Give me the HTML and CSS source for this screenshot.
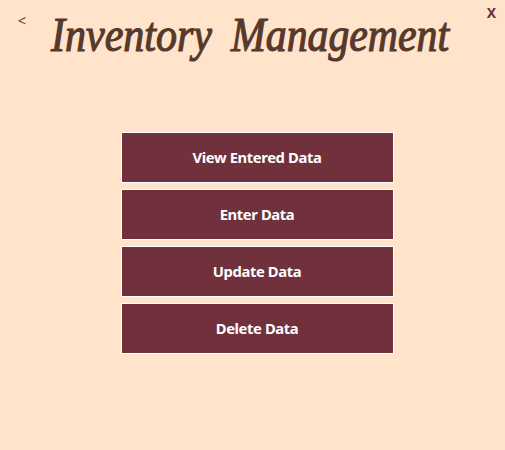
FILE: index.html
```
<!DOCTYPE html>
<html lang="en">
<head>
<meta charset="utf-8">
<title>Inventory Management</title>
<link rel="stylesheet" href="styles.css">
</head>
<body>
<header class="header">
  <button class="nav back">&lt;</button>
  <h1 class="title">
    <svg class="lettering" width="420" height="80" viewBox="42 0 420 80">
      <text x="51" y="51" textLength="161" lengthAdjust="spacingAndGlyphs">Inventory</text>
      <text x="231" y="51" textLength="218" lengthAdjust="spacingAndGlyphs">Management</text>
    </svg>
  </h1>
  <button class="nav close">X</button>
</header>
<main class="menu">
  <button class="action">View Entered Data</button>
  <button class="action">Enter Data</button>
  <button class="action">Update Data</button>
  <button class="action">Delete Data</button>
</main>
</body>
</html>
```

FILE: styles.css
```
* { box-sizing: border-box; }
body {
  margin: 0;
  height: 450px;
  overflow: hidden;
  background: #ffe4cb;
  font-family: "Noto Sans", sans-serif;
}
.header {
  display: grid;
  grid-template-columns: 42px 420px 43px;
  height: 80px;
}
.title { margin: 0; font-size: 0; }
.lettering {
  display: block;
  overflow: visible;
  fill: #57382b;
  stroke: #57382b;
  stroke-width: 1.2px;
  font: italic 400 48px "Liberation Serif", cursive;
}
.nav {
  border: 0;
  padding: 0;
  background: none;
  color: #70313d;
  font-family: "Noto Sans", sans-serif;
  align-self: start;
}
.back { margin: 11px 0 0 2px; font-size: 14.5px; line-height: 18px; }
.close { margin: 4px 0 0 16px; font-size: 14px; line-height: 18px; font-weight: 700; }
.menu {
  width: 273px;
  margin: 52px 0 0 121px;
  display: grid;
  gap: 6px;
}
.action {
  height: 51px;
  padding: 0 1px 2px 0;
  border: 1px solid #fff;
  background: #70313d;
  color: #fff;
  font: 700 14.8px "Noto Sans", sans-serif;
  letter-spacing: -0.4px;
}
```
